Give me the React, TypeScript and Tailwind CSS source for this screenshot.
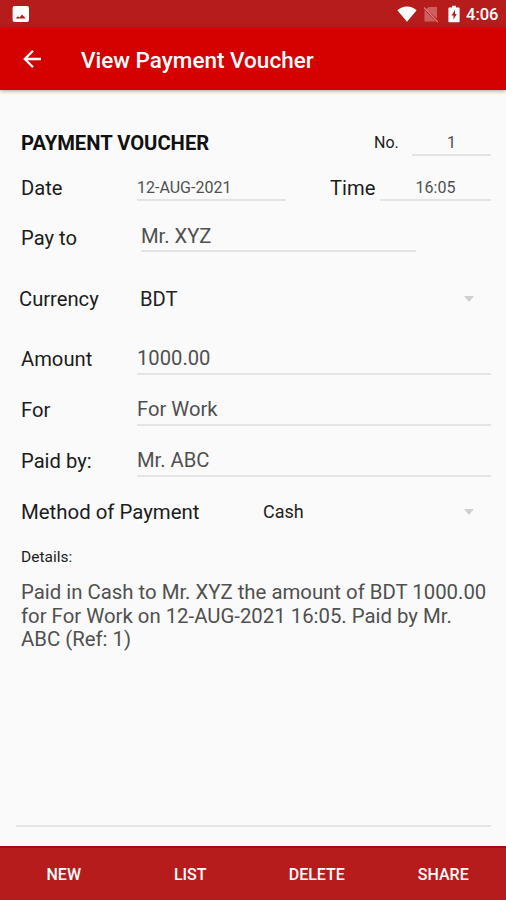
import type { ReactNode } from "react";
import clsx from "clsx";

function StatusBar() {
  return (
    <div className="flex h-7 items-center justify-between bg-[#b71c1c] pl-3 pr-2 text-white">
      <svg viewBox="0 0 18 18" className="h-[18px] w-[18px]">
        <rect x="0.6" y="1" width="16.4" height="16" rx="2" fill="currentColor" />
        <path d="M3.600 13.400l2.200-2.200 1.800 1.300 2.400-3.100 3.800 4z" fill="#b71c1c" />
      </svg>
      <div className="flex items-center">
        <svg viewBox="0 0 20 16" className="h-4 w-5">
          <path d="M10 15.8L0.4 4.2C3 1.8 6.300.4 10 .4s7 1.4 9.600 3.800z" fill="currentColor" />
        </svg>
        <svg viewBox="0 0 16 17" className="ml-[6px] h-[17px] w-4">
          <path d="M5.500 1H14v11.500L3.200 3.400zM1.500 4L12.700 15.500H1.500z" fill="#cf5f5f" />
          <path d="M1 1.500L14.800 16" stroke="#d98080" strokeWidth="1.100" />
        </svg>
        <svg viewBox="0 0 12 18" className="ml-[9px] h-[18px] w-3">
          <path d="M4 .8h4v1.700h2.600c.6 0 1 .4 1 1v12.700c0 .6-.4 1-1 1H1.400c-.6 0-1-.4-1-1V3.500c0-.6.4-1 1-1H4z" fill="currentColor" />
          <path d="M7 5L3.500 10.500h2V14.500L8.800 9H7z" fill="#b71c1c" />
        </svg>
        <span className="ml-[6px] w-8 whitespace-nowrap pt-px text-[16.500px] font-medium leading-7">4:06</span>
      </div>
    </div>
  );
}

function AppBar() {
  return (
    <header className="z-10 flex h-[62px] items-center bg-[#d50000] text-white shadow-[0_1px_4px_rgba(0,0,0,0.35)]">
      <button className="ml-[22px] flex h-5 w-5 items-center justify-center">
        <svg viewBox="0 0 20 20" className="h-5 w-5" fill="none" stroke="currentColor" strokeWidth="2.300">
          <path d="M19 10H2.800M11 1.800L2.800 10l8.200 8.200" />
        </svg>
      </button>
      <h1 className="ml-[39px] pt-[3px] text-[22.500px] font-medium">View Payment Voucher</h1>
    </header>
  );
}

function Row({ className, children }: { className: string; children: ReactNode }) {
  return <div className={clsx("flex shrink-0 items-end", className)}>{children}</div>;
}

function Label({ className, children }: { className: string; children: ReactNode }) {
  return (
    <span className={clsx("shrink-0 whitespace-nowrap leading-6 text-[#1c1c1c]", className)}>
      {children}
    </span>
  );
}

function Field({ className, children }: { className: string; children: ReactNode }) {
  return (
    <span
      className={clsx(
        "block whitespace-nowrap border-b-2 border-[#e4e4e4] text-[#505050]",
        className,
      )}
    >
      {children}
    </span>
  );
}

function Spinner({ className, children }: { className: string; children: ReactNode }) {
  return (
    <button className={clsx("flex items-center justify-between leading-6 text-[#222]", className)}>
      <span>{children}</span>
      <svg viewBox="0 0 10 6" className="mb-px mr-[17px] h-[6px] w-[10px]">
        <path d="M0 0h10L5 6z" fill="#d0d0d0" />
      </svg>
    </button>
  );
}

const actions = ["NEW", "LIST", "DELETE", "SHARE"];

export default function App() {
  return (
    <div className="flex h-[900px] w-[506px] flex-col overflow-hidden bg-[#fafafa] font-[Roboto,sans-serif]">
      <StatusBar />
      <AppBar />
      <main className="flex flex-1 flex-col pr-[15px] text-[20.200px]">
        <Row className="mt-9 h-[30px] pl-[21px]">
          <Label className="w-[353px] pb-px font-bold text-[#111]">PAYMENT VOUCHER</Label>
          <Label className="w-[38px] pb-px text-[16px]">No.</Label>
          <Field className="flex-1 text-center text-[16px] leading-[22px]">1</Field>
        </Row>
        <Row className="h-[45px] pl-[21px]">
          <Label className="w-[116px] pb-px">Date</Label>
          <Field className="w-[149px] text-[16px] leading-[22px]">12-AUG-2021</Field>
          <Label className="ml-11 w-[50px] pb-px">Time</Label>
          <Field className="flex-1 text-center text-[16px] leading-[22px]">16:05</Field>
        </Row>
        <Row className="h-[51px] pl-[21px]">
          <Label className="w-[120px] pb-[2px]">Pay to</Label>
          <Field className="w-[275px] pb-[2px] leading-6">Mr. XYZ</Field>
        </Row>
        <Row className="h-[59px] pl-[19px]">
          <Label className="w-[121px]">Currency</Label>
          <Spinner className="flex-1">BDT</Spinner>
        </Row>
        <Row className="h-16 pl-[21px]">
          <Label className="w-[116px] pb-1">Amount</Label>
          <Field className="flex-1 pb-[3px] leading-6">1000.00</Field>
        </Row>
        <Row className="h-[51px] pl-[21px]">
          <Label className="w-[116px] pb-1">For</Label>
          <Field className="flex-1 pb-[3px] leading-6">For Work</Field>
        </Row>
        <Row className="h-[51px] pl-[21px]">
          <Label className="w-[116px] pb-1">Paid by:</Label>
          <Field className="flex-1 pb-[3px] leading-6">Mr. ABC</Field>
        </Row>
        <Row className="h-[47px] pl-[21px]">
          <Label className="w-[242px] text-[20.400px]">Method of Payment</Label>
          <Spinner className="flex-1 text-[18px]">Cash</Spinner>
        </Row>
        <Row className="h-[45px] pl-[21px]">
          <Label className="text-[15.500px]">Details:</Label>
        </Row>
        <p className="ml-4 h-[258px] border-b-2 border-[#e4e4e4] pl-[5px] pt-[12px] text-[20.350px] leading-[23.700px] text-[#505050]">
          Paid in Cash to Mr. XYZ the amount of BDT 1000.00
          <br />
          for For Work on 12-AUG-2021 16:05. Paid by Mr.
          <br />
          ABC (Ref: 1)
        </p>
      </main>
      <footer className="grid h-[54px] grid-cols-4 border-t-2 border-[#ad0a0d] bg-[#b71c1c]">
        {actions.map((a) => (
          <button key={a} className="pl-px pt-[2px] text-[16px] font-medium text-white">
            {a}
          </button>
        ))}
      </footer>
    </div>
  );
}
